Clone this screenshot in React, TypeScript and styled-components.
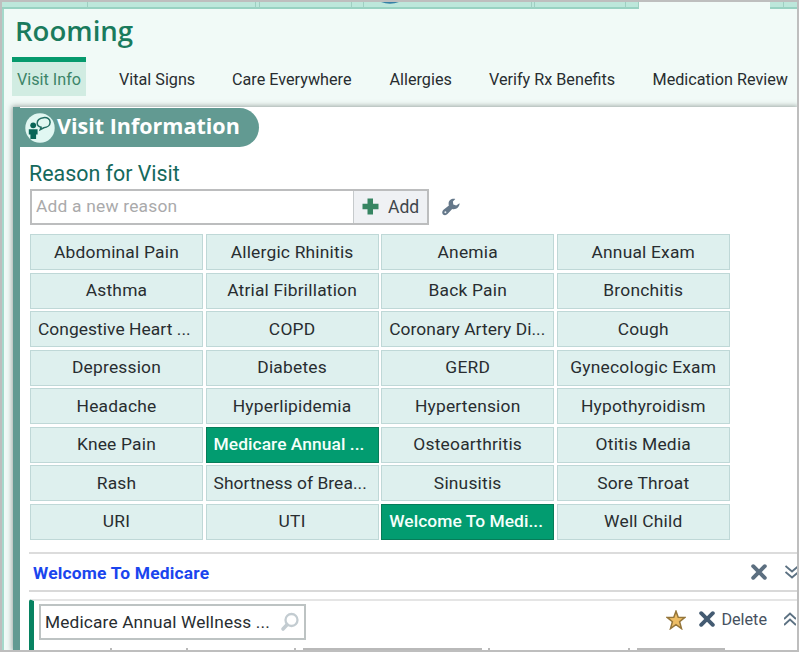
import React from "react";
import styled, { createGlobalStyle, css } from "styled-components";

const GlobalStyle = createGlobalStyle`
  * { box-sizing: border-box; }
  body { margin: 0; overflow: hidden; font-family: Roboto, "Liberation Sans", sans-serif; color: #282d30; }
  button, input { font: inherit; color: inherit; margin: 0; padding: 0; border: 0; background: none; }
`;

const Window = styled.div`
  width: 799px;
  height: 652px;
  border: 2px solid #bebebe;
  overflow: hidden;
  background: #f1faf7;
  display: flex;
  flex-direction: column;
`;

const TabStrip = styled.div`
  display: flex;
  height: 7px;
  flex: none;
`;

const StripTab = styled.div<{ $w: number; $open?: boolean }>`
  width: ${(p) => p.$w}px;
  flex: none;
  display: flex;
  padding-left: 17px;
  ${(p) =>
    !p.$open &&
    css`
      background: #bde7db;
      border-bottom: 2px solid #98d2c2;
      border-right: 1px solid #9fcfc2;
    `}
`;

const SlimTab = styled(StripTab)`
  padding-left: 0;
`;

const Workspace = styled.div`
  flex: 1;
  min-height: 0;
  display: flex;
  flex-direction: column;
  border-left: 2px solid #a5d9cb;
`;

const Title = styled.h1`
  margin: 0;
  padding: 2px 0 0 11px;
  height: 48px;
  flex: none;
  font: 600 27.6px/38px "Open Sans", sans-serif;
  color: #1a7b5d;
`;

const Nav = styled.nav`
  display: flex;
  height: 39px;
  flex: none;
  padding-left: 8px;
`;

const NavTab = styled.button<{ $w: number; $active?: boolean }>`
  width: ${(p) => p.$w}px;
  flex: none;
  display: flex;
  white-space: nowrap;
  padding: 6px 0 0 5px;
  font-size: 16.2px;
  line-height: 24px;
  border-top: 5px solid ${(p) => (p.$active ? "#069a6d" : "transparent")};
  ${(p) =>
    p.$active &&
    css`
      color: #3c8468;
      background: #d1ece2;
      background-clip: padding-box;
      margin-right: 28px;
    `}
`;

const Panel = styled.main`
  flex: 1;
  min-height: 0;
  margin: 11px 0 0 9px;
  padding-left: 7px;
  background: linear-gradient(to right, #629a92 7px, #fff 7px);
  box-shadow: 0 0 5px 1px rgba(70, 85, 80, 0.5);
  display: flex;
  flex-direction: column;
`;

const PanelHeading = styled.h2`
  margin: 1px 0 0 -7px;
  width: 246px;
  height: 39px;
  flex: none;
  display: flex;
  align-items: center;
  padding: 0 0 0 12px;
  gap: 2px;
  border-radius: 0 20px 20px 0;
  background: #629a92;
  color: #fff;
  font: 700 21.5px/30px "Open Sans", sans-serif;
`;

const HeadingText = styled.span`
  padding-bottom: 3px;
  white-space: nowrap;
`;

const Body = styled.div`
  padding: 13px 0 0 10px;
  flex: none;
`;

const SectionTitle = styled.h3`
  margin: 0 0 2px -1px;
  font-size: 21.4px;
  line-height: 27px;
  font-weight: 400;
  color: #15695c;
`;

const AddRow = styled.div`
  display: flex;
  align-items: center;
  height: 36px;
  gap: 13px;
`;

const AddBox = styled.div`
  display: flex;
  width: 399px;
  height: 36px;
  border: 2px solid #bcbdbe;
`;

const ReasonInput = styled.input`
  flex: 1;
  min-width: 0;
  padding: 0 0 2px 4px;
  background: #fff;
  outline: 0;
  font-size: 17.4px;
  letter-spacing: 0.2px;
  &::placeholder { color: #aaaaab; opacity: 1; }
`;

const AddButton = styled.button`
  width: 74px;
  border-left: 1px solid #c6cacc;
  background: #eff1f4;
  display: flex;
  align-items: center;
  padding: 0 0 1px 8px;
  gap: 9px;
  font-size: 17.5px;
  color: #40464b;
`;

const ReasonGrid = styled.div`
  display: grid;
  grid-template-columns: repeat(4, 173px);
  grid-auto-rows: 36px;
  gap: 2.5px 2.6px;
  margin-top: 9px;
`;

const Reason = styled.button<{ $selected?: boolean; $clipped?: boolean }>`
  padding: 0 0 1px ${(p) => (p.$clipped ? 7 : 0)}px;
  overflow: hidden;
  white-space: nowrap;
  text-align: ${(p) => (p.$clipped ? "left" : "center")};
  font-size: 17.4px;
  letter-spacing: ${(p) => (p.$clipped ? 0.05 : 0.2)}px;
  border: 1px solid #bfd8d7;
  background: #def0ee;
  ${(p) =>
    p.$selected &&
    css`
      background: #029c70;
      border-color: #077c59;
      color: #f5fffb;
      font-weight: 500;
    `}
`;

const VisitRow = styled.section`
  margin: 12px 0 0 9px;
  height: 40px;
  flex: none;
  display: flex;
  align-items: center;
  border-top: 2px solid #dcdcdc;
  border-bottom: 2px solid #d9d9d9;
`;

const VisitName = styled.strong`
  flex: 1;
  padding: 3px 0 0 4px;
  font-size: 17.4px;
  letter-spacing: 0.2px;
  color: #1a45ee;
`;

const CollapseButton = styled.button`
  margin-left: 18px;
`;

const Detail = styled.section`
  margin: 7px 0 0 9px;
  flex: 1;
  min-height: 0;
  overflow: hidden;
  border-top: 2px solid #e5e5e5;
  border-left: 5px solid #078261;
  border-top-left-radius: 3px;
  display: flex;
  flex-direction: column;
  justify-content: space-between;
  padding: 3px 0 0 5px;
`;

const DetailTop = styled.div`
  display: flex;
  flex: none;
  height: 37px;
`;

const SearchBox = styled.div`
  width: 267px;
  height: 36px;
  border: 2px solid #bdc3c3;
  display: flex;
  align-items: center;
  padding-left: 4px;
  font-size: 17.3px;
  white-space: nowrap;
`;

const SearchText = styled.span`
  width: 235px;
  letter-spacing: 0.15px;
`;

const Actions = styled.div`
  flex: 1;
  display: flex;
  align-items: flex-start;
  justify-content: flex-end;
  padding-top: 6px;
  overflow: hidden;
`;

const Delete = styled.button`
  display: flex;
  align-items: center;
  gap: 6px;
  height: 19px;
  margin: 0 17px 0 13px;
  font-size: 16.2px;
  color: #465160;
`;

const ExpandButton = styled.button`
  padding-top: 2px;
  margin-right: 1px;
`;

/* Upper edges of the controls that scroll out below the detail row. */
const ClippedTabs = styled.div`
  display: flex;
  height: 2px;
  flex: none;
`;

const ClippedEdge = styled.i<{ $skip: number; $w: number }>`
  margin-left: ${(p) => p.$skip}px;
  width: ${(p) => p.$w}px;
  background: #b9b9b9;
  flex: none;
`;

const Icon = styled.svg`
  display: block;
  flex: none;
`;

const VisitIcon = () => (
  <Icon width="30" height="30" viewBox="0 0 30 30">
    <circle cx="15" cy="15" r="14.7" fill="#e1f7f2" />
    <circle cx="8.2" cy="12.3" r="2.9" fill="#096557" />
    <path d="M3.8 16.2h8.8v5.3h-1.5V26H5.400v-4.500H3.800z" fill="#096557" />
    <path d="M18.5 4.700c4-.5 6.600 1.500 6.600 4.500s-2.800 5.300-6.300 5.600l-3.600 1.900.9-2.400c-2.500-.6-3.900-1.900-3.900-4 0-3 2.600-5.200 6.300-5.600z" fill="#e1f7f2" stroke="#236e64" strokeWidth="1.500" />
  </Icon>
);

const PlusIcon = () => (
  <Icon width="17" height="17" viewBox="0 0 17 17">
    <path d="M5.500 .5h5.500v5.300h5.500v5.400H11v5.300H5.500v-5.300H.5V5.800h5z" fill="#378562" />
  </Icon>
);

const WrenchIcon = () => (
  <Icon width="18" height="18" viewBox="0 0 18 18">
    <path d="M13.300 1C9.800.1 6.500 2.300 6.600 5.700c0 .6.100 1.200.3 1.700L1.500 11.800c-1.600 1.400-1.600 3.400-.5 4.600 1.200 1.200 3.300 1.100 4.500-.3l4.700-5.100c3.900.9 7.500-1.700 7.400-5.800l-3.400 2.300-2.900-1-.4-2.900z" fill="#65788a" />
    <circle cx="3.400" cy="14.200" r="1" fill="#e8edf1" />
  </Icon>
);

const CrossIcon = ({ color }: { color: string }) => (
  <Icon width="16" height="16" viewBox="0 0 16 16">
    <path d="M2.200 2.200 13.800 13.800M13.800 2.200 2.200 13.800" stroke={color} strokeWidth="3.900" strokeLinecap="round" />
  </Icon>
);

const DoubleChevron = ({ up }: { up?: boolean }) => (
  <Icon width="12" height="14" viewBox="0 0 12 14" fill="none" stroke="#5c7182" strokeWidth="1.900">
    <path d={up ? "M0 7 6 1.500 12 7M0 13 6 7.500 12 13" : "M.5 1 7 6.500 13.500 1M.5 7 7 12.500 13.500 7"} />
  </Icon>
);

const StarIcon = () => (
  <Icon width="20" height="20" viewBox="0 0 20 20">
    <path d="M10 1.200 12.200 7.200 18.900 7.400 13.600 11.700 15.500 18.600 10 14.700 4.500 18.600 6.400 11.700 1.100 7.400 7.800 7.200z" fill="#edbd65" stroke="#95763a" strokeWidth="1.500" />
  </Icon>
);

const SearchIcon = () => (
  <Icon width="20" height="20" viewBox="0 0 20 20" fill="none" stroke="#c3ccd1">
    <circle cx="11.500" cy="8" r="6" strokeWidth="2.300" />
    <path d="M7 12.700 3 17" strokeWidth="3.600" strokeLinecap="round" />
  </Icon>
);

const reasons = [
  "Abdominal Pain", "Allergic Rhinitis", "Anemia", "Annual Exam",
  "Asthma", "Atrial Fibrillation", "Back Pain", "Bronchitis",
  "Congestive Heart ...", "COPD", "Coronary Artery Di...", "Cough",
  "Depression", "Diabetes", "GERD", "Gynecologic Exam",
  "Headache", "Hyperlipidemia", "Hypertension", "Hypothyroidism",
  "Knee Pain", "Medicare Annual ...", "Osteoarthritis", "Otitis Media",
  "Rash", "Shortness of Brea...", "Sinusitis", "Sore Throat",
  "URI", "UTI", "Welcome To Medi...", "Well Child",
];
const selected = ["Medicare Annual ...", "Welcome To Medi..."];

const navTabs: [string, number][] = [
  ["Vital Signs", 113], ["Care Everywhere", 157.5], ["Allergies", 99.5],
  ["Verify Rx Benefits", 163.5], ["Medication Review", 147],
];

export default function App() {
  return (
    <>
      <GlobalStyle />
      <Window>
        <TabStrip>
          <StripTab $w={86} />
          <StripTab $w={168} />
          <SlimTab $w={4} />
          <StripTab $w={92} />
          <SlimTab $w={12} />
          <StripTab $w={168}>
            <Icon width="18" height="2" viewBox="0 0 18 2">
              <path d="M0 0h18Q9 3.500 0 0" fill="#3580a5" />
            </Icon>
          </StripTab>
          <SlimTab $w={3} />
          <StripTab $w={91} />
          <SlimTab $w={13} />
          <StripTab $w={131} $open />
          <SlimTab $w={14} />
          <SlimTab $w={14} />
        </TabStrip>
        <Workspace>
          <Title>Rooming</Title>
          <Nav>
            <NavTab $w={74} $active>Visit Info</NavTab>
            {navTabs.map(([label, width]) => (
              <NavTab key={label} $w={width}>{label}</NavTab>
            ))}
          </Nav>
          <Panel>
            <PanelHeading>
              <VisitIcon />
              <HeadingText>Visit Information</HeadingText>
            </PanelHeading>
            <Body>
              <SectionTitle>Reason for Visit</SectionTitle>
              <AddRow>
                <AddBox>
                  <ReasonInput placeholder="Add a new reason" />
                  <AddButton><PlusIcon />Add</AddButton>
                </AddBox>
                <WrenchIcon />
              </AddRow>
              <ReasonGrid>
                {reasons.map((r) => (
                  <Reason key={r} $selected={selected.includes(r)} $clipped={r.endsWith("...")}>{r}</Reason>
                ))}
              </ReasonGrid>
            </Body>
            <VisitRow>
              <VisitName>Welcome To Medicare</VisitName>
              <CrossIcon color="#5c6f80" />
              <CollapseButton><DoubleChevron /></CollapseButton>
            </VisitRow>
            <Detail>
              <DetailTop>
                <SearchBox>
                  <SearchText>Medicare Annual Wellness ...</SearchText>
                  <SearchIcon />
                </SearchBox>
                <Actions>
                  <StarIcon />
                  <Delete><CrossIcon color="#445b72" />Delete</Delete>
                  <ExpandButton><DoubleChevron up /></ExpandButton>
                </Actions>
              </DetailTop>
              <ClippedTabs>
                <ClippedEdge $skip={71} $w={2} />
                <ClippedEdge $skip={74} $w={2} />
                <ClippedEdge $skip={106} $w={2} />
                <ClippedEdge $skip={7} $w={179} />
                <ClippedEdge $skip={6} $w={2} />
                <ClippedEdge $skip={138} $w={2} />
                <ClippedEdge $skip={7} $w={88} />
              </ClippedTabs>
            </Detail>
          </Panel>
        </Workspace>
      </Window>
    </>
  );
}
